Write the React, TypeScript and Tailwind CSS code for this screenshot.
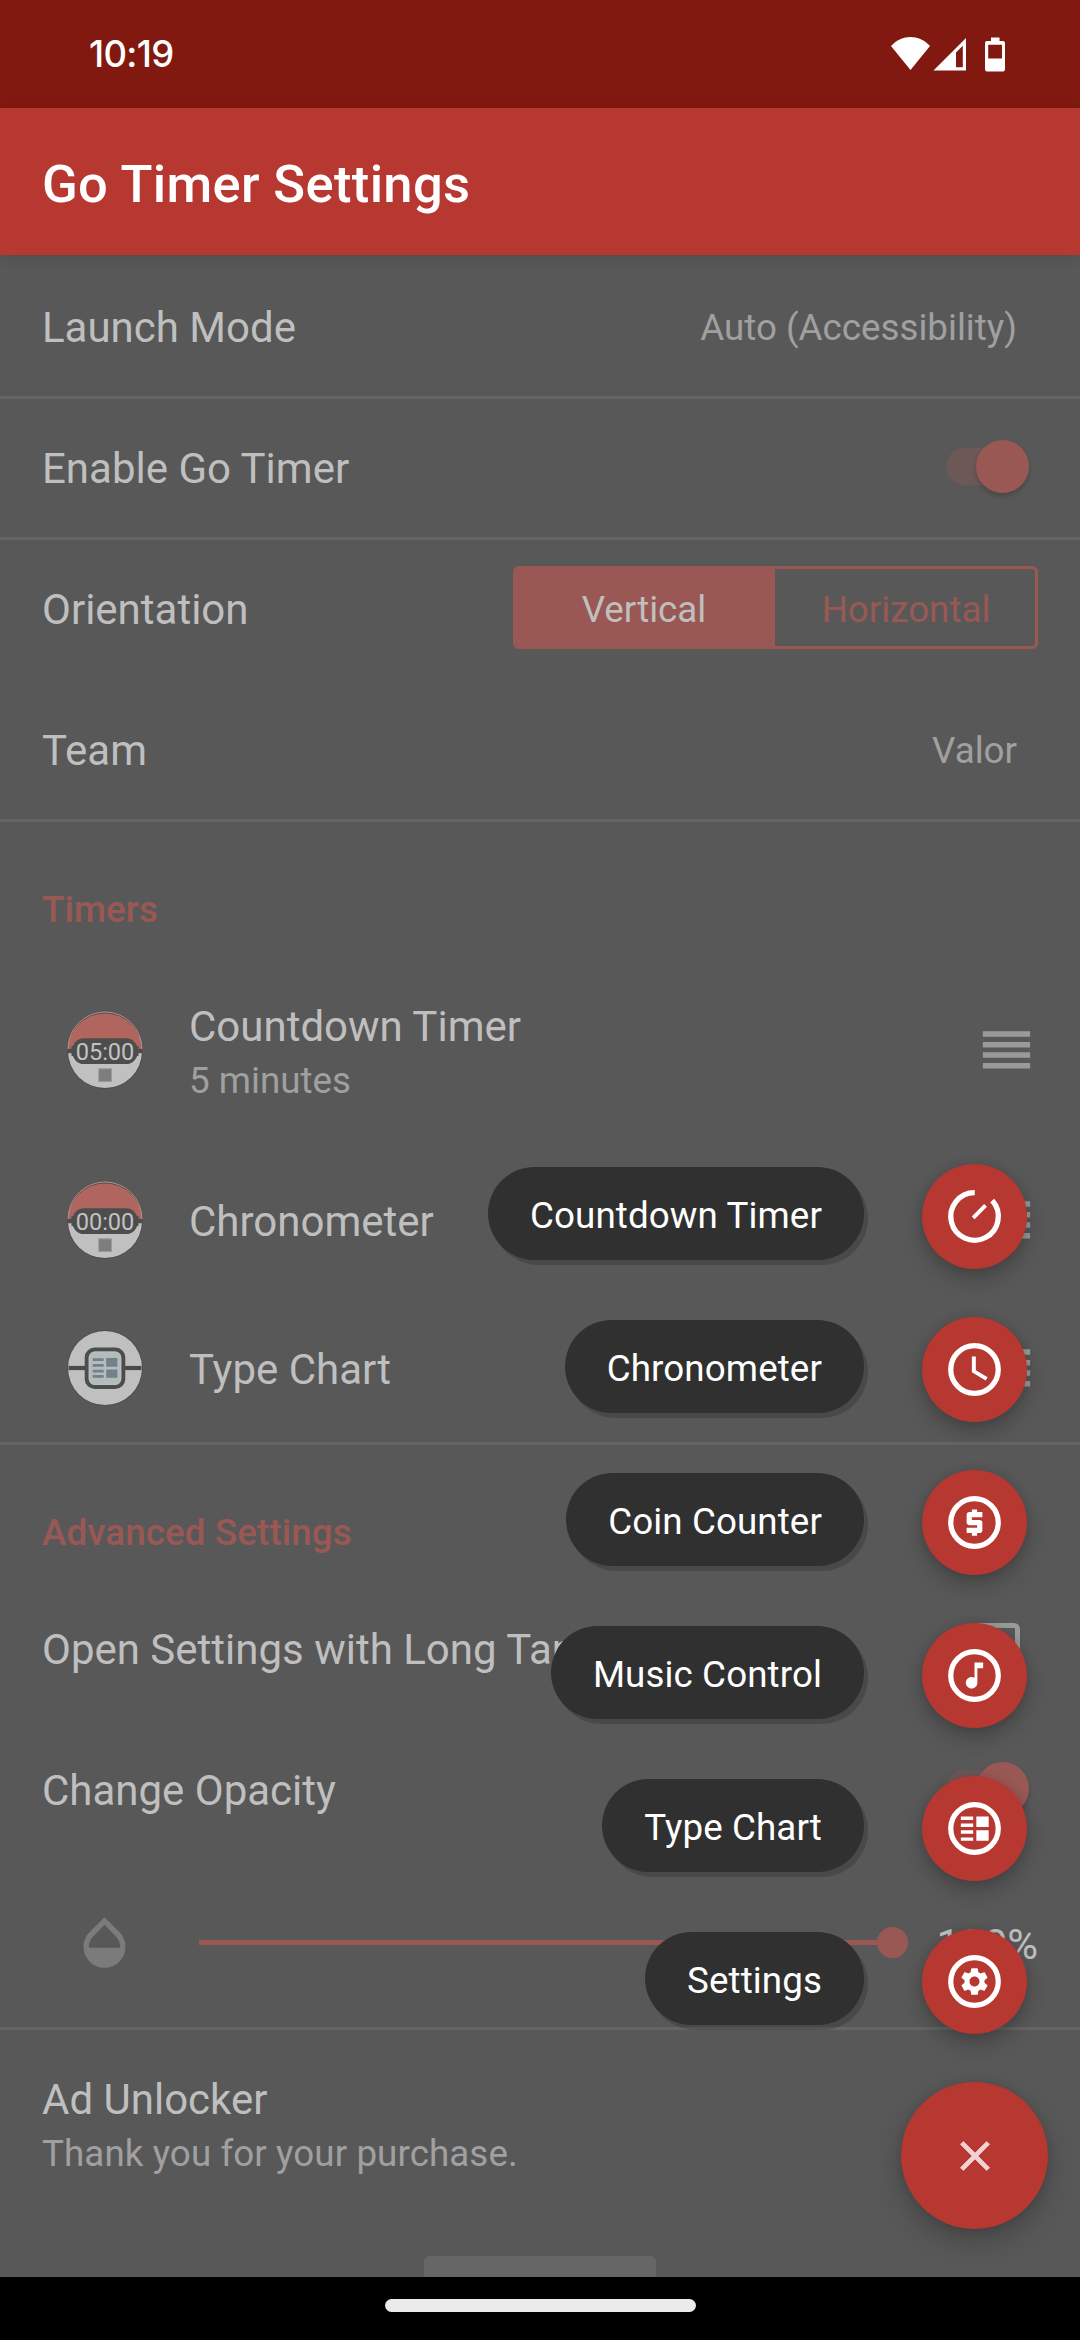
import type { ReactNode } from "react";

const ROBOTO = "font-['Roboto','Liberation_Sans',sans-serif]";

function Divider() {
  return <div className="h-[3px] shrink-0 bg-[#656565]" />;
}

function Row({ label, children }: { label: string; children?: ReactNode }) {
  return (
    <div className="mt-[3px] flex h-[138px] shrink-0 items-center justify-between pl-[42px]">
      <span className="text-[42px] leading-[49px] whitespace-nowrap text-[#bfbfbf]">{label}</span>
      {children}
    </div>
  );
}

function Value({ children }: { children: ReactNode }) {
  return <span className="pr-[63px] text-[36.75px] leading-[43px] text-[#a0a0a0]">{children}</span>;
}

function Toggle() {
  return (
    <div className="mr-[51px] mb-[3px] flex h-[53px] w-[83px] items-center">
      <div className="flex h-[37px] w-[74px] items-center rounded-full bg-[#6c5857]">
        <div className="ml-[30px] size-[53px] shrink-0 rounded-full bg-[#9a5855] shadow-[0_3px_5px_rgba(0,0,0,0.2)]" />
      </div>
    </div>
  );
}

function SectionHeader({ children }: { children: ReactNode }) {
  return (
    <h2 className="pt-[66px] pl-[42px] text-[36.75px] leading-[43px] font-medium tracking-[0.1px] text-[#9a5855]">
      {children}
    </h2>
  );
}

function Ball({ time }: { time: string }) {
  return (
    <svg className="size-[80px]" viewBox="-40 -40 80 80">
      <circle r="37.9" fill="#4d4d4d" />
      <circle r="37" fill="#c0c0c0" />
      <path d="M-36.6 -1A36.6 36.6 0 0 1 36.6 -1Z" fill="#b0665e" />
      <path d="M-37 -2A37 37 0 0 1 37 -2" fill="none" stroke="#b98a86" strokeWidth="1" />
      <rect x="-37" y="-2.2" width="74" height="4.4" fill="#4d4d4d" />
      <rect x="-33.5" y="-5" width="67" height="10" fill="#4d4d4d" />
      <rect x="-32.6" y="-12.7" width="65.2" height="25.8" rx="11.5" fill="#4d4d4d" />
      <text
        x="0"
        y="9"
        fontSize="23.6"
        textAnchor="middle"
        fill="#c2c2c2"
        className="font-['Roboto','Liberation_Sans',sans-serif]"
      >
        {time}
      </text>
      <rect x="-6.2" y="17.8" width="12.6" height="12.6" fill="#7d7d7d" stroke="#999" strokeWidth="1" />
    </svg>
  );
}

function ChartBall() {
  return (
    <svg className="size-[80px]" viewBox="-40 -40 80 80">
      <circle r="37.9" fill="#4d4d4d" />
      <circle r="37" fill="#c0c0c0" />
      <rect x="-36.5" y="-2.1" width="73" height="4.2" fill="#4a4a4a" />
      <rect x="-18.3" y="-18.5" width="36.6" height="37.4" rx="8" fill="#b4bbbd" stroke="#4d4d4d" strokeWidth="4" />
      <rect x="-15.7" y="-15.9" width="31.4" height="32.2" rx="5.5" fill="none" stroke="#c0c0c0" strokeWidth="1" />
      <path
        d="M-12.3-9.7h11v2.7h-11zM-12.3-4h11v2.7h-11zM-12.3 1.7h11v2.7h-11zM-12.3 7h11v2.7h-11zM1.2-10h11.2v8.7H1.2zM1.2 1.5h11.2v8.3H1.2z"
        fill="#72808a"
      />
    </svg>
  );
}

function DragHandle() {
  return (
    <svg className="mr-[42px] mb-[2px] size-[63px]" viewBox="0 0 24 24" fill="#9a9a9a">
      <path d="M3 5h18v2.1H3zM3 9.1h18v2.1H3zM3 13h18v2.1H3zM3 17.1h18v2.1H3z" />
    </svg>
  );
}

function TimerText({ title, detail }: { title: string; detail?: string }) {
  return (
    <div className="mt-[2px] ml-[44px] flex flex-1 flex-col gap-2">
      <span className="text-[42px] leading-[49px] text-[#bfbfbf]">{title}</span>
      {detail && <span className="text-[36.75px] leading-[43px] text-[#a0a0a0]">{detail}</span>}
    </div>
  );
}

const GEAR =
  "M19.14 12.94c.04-.3.06-.61.06-.94 0-.32-.02-.64-.07-.94l2.03-1.58c.18-.14.23-.41.12-.61l-1.92-3.32c-.12-.22-.37-.29-.59-.22l-2.39.96c-.5-.38-1.03-.7-1.62-.94l-.36-2.54c-.04-.24-.24-.41-.48-.41h-3.84c-.24 0-.43.17-.47.41l-.36 2.54c-.59.24-1.13.57-1.62.94l-2.39-.96c-.22-.08-.47 0-.59.22L2.74 8.87c-.12.21-.08.47.12.61l2.03 1.58c-.05.3-.09.63-.09.94s.02.64.07.94l-2.03 1.58c-.18.14-.23.41-.12.61l1.92 3.32c.12.22.37.29.59.22l2.39-.96c.5.38 1.03.7 1.62.94l.36 2.54c.05.24.24.41.48.41h3.84c.24 0 .44-.17.47-.41l.36-2.54c.59-.24 1.13-.56 1.62-.94l2.39.96c.22.08.47 0 .59-.22l1.92-3.32c.12-.22.07-.47-.12-.61l-2.01-1.58zM12 15.6c-1.98 0-3.6-1.62-3.6-3.6s1.62-3.6 3.6-3.6 3.6 1.62 3.6 3.6-1.62 3.6-3.6 3.6z";

const RING = <circle cx="12" cy="12" r="9.05" fill="none" stroke="#fff" strokeWidth="2" />;

const ACTIONS: { label: string; icon: ReactNode }[] = [
  {
    label: "Countdown Timer",
    icon: (
      <g fill="none" stroke="#fff">
        <path d="M12.1 2.95A9.05 9.05 0 1 0 18.75 5.95" strokeWidth="2" />
        <path d="M11.5 12.5l4.7-4.7" strokeWidth="1.5" />
      </g>
    ),
  },
  {
    label: "Chronometer",
    icon: (
      <>
        {RING}
        <path d="M12.5 7H11v6l5.25 3.15.75-1.23-4.5-2.67z" />
      </>
    ),
  },
  {
    label: "Coin Counter",
    icon: (
      <>
        {RING}
        <path d="M11 17h2v-1h1c.55 0 1-.45 1-1v-3c0-.55-.45-1-1-1h-3v-1h4V8h-2V7h-2v1h-1c-.55 0-1 .45-1 1v3c0 .55.45 1 1 1h3v1H9v2h2v1z" />
      </>
    ),
  },
  {
    label: "Music Control",
    icon: (
      <>
        {RING}
        <path
          transform="translate(5.4 5.4) scale(.55)"
          d="M12 3v10.55c-.59-.34-1.27-.55-2-.55-2.21 0-4 1.79-4 4s1.79 4 4 4 4-1.79 4-4V7h4V3h-6z"
        />
      </>
    ),
  },
  {
    label: "Type Chart",
    icon: (
      <>
        {RING}
        <path d="M6.8 7.4h4.7v1.4H6.8zM6.8 10.1h4.7v1.3H6.8zM6.8 12.7h4.7V14H6.8zM6.8 15.4h4.7v1.3H6.8zM12.7 7.4h4.7v4h-4.7zM12.7 12.7h4.7v4h-4.7z" />
      </>
    ),
  },
  {
    label: "Settings",
    icon: (
      <>
        {RING}
        <path transform="translate(5.64 5.64) scale(.53)" d={GEAR} />
      </>
    ),
  },
];

function SpeedDial() {
  return (
    <div className="absolute top-[1164px] right-[32px] flex flex-col items-end gap-[48px]">
      {ACTIONS.map((a) => (
        <div key={a.label} className="mr-[21px] flex h-[105px] items-center gap-[58px]">
          <span className="mb-[6px] flex h-[93px] items-center rounded-full bg-[#303030] px-[42px] pt-[3px] text-[36.75px] leading-[43px] tracking-[0.1px] whitespace-nowrap text-white shadow-[4px_5px_0_rgba(0,0,0,0.16)]">
            {a.label}
          </span>
          <div className="flex size-[105px] items-center justify-center rounded-full bg-[#b73731] shadow-[0_10px_20px_rgba(0,0,0,0.22),0_0_8px_rgba(0,0,0,0.1)]">
            <svg className="size-[63px]" viewBox="0 0 24 24" fill="#fff">
              {a.icon}
            </svg>
          </div>
        </div>
      ))}
      <div className="flex size-[147px] items-center justify-center rounded-full bg-[#b73731] shadow-[0_12px_26px_rgba(0,0,0,0.22),0_0_8px_rgba(0,0,0,0.1)]">
        <svg className="size-[50px]" viewBox="0 0 24 24" fill="#f0d3d2" stroke="#f0d3d2" strokeWidth="0.35">
          <path d="M19 6.41L17.59 5 12 10.59 6.41 5 5 6.41 10.59 12 5 17.59 6.41 19 12 13.41 17.59 19 19 17.59 13.41 12z" />
        </svg>
      </div>
    </div>
  );
}

function StatusBar() {
  return (
    <header className="flex h-[108px] shrink-0 items-center justify-between bg-[#821911] pr-[74px] pl-[89px]">
      <span className="font-['Inter','Roboto',sans-serif] text-[36.5px] leading-[44px] font-medium tracking-[-0.7px] text-white">
        10:19
      </span>
      <svg className="h-[36px] w-[116px]" viewBox="0 0 116 36" fill="#fff">
        <path d="M1 10C12-2 29-2 40 10L20.5 34Z" />
        <path fillRule="evenodd" d="M43.5 34.5L76 2V34.5ZM66 16.5V31.3H72.8V9.7Z" />
        <path
          fillRule="evenodd"
          d="M101 1.5h8.5V5h3.5q2 0 2 2v26q0 2.500-2 2.500H97q-2 0-2-2.500V7q0-2 2-2h4ZM98.200 8.700V22.500H112V8.700Z"
        />
      </svg>
    </header>
  );
}

export default function App() {
  return (
    <div className={`relative flex h-[2340px] w-[1080px] flex-col overflow-hidden bg-[#585858] ${ROBOTO}`}>
      <StatusBar />
      <div className="z-10 flex h-[147px] shrink-0 items-center bg-[#b73731] pt-[4px] pl-[42px] shadow-[0_2px_12px_rgba(0,0,0,0.12)]">
        <h1 className="text-[52.5px] leading-[62px] font-medium tracking-[0.35px] text-white">Go Timer Settings</h1>
      </div>

      <main className="flex min-h-0 flex-1 flex-col overflow-hidden">
        <Row label="Launch Mode">
          <Value>Auto (Accessibility)</Value>
        </Row>
        <Divider />
        <div className="-mt-[3px] flex flex-col">
          <Row label="Enable Go Timer">
            <Toggle />
          </Row>
        </div>
        <Divider />
        <div className="-mt-[3px] flex flex-col">
          <Row label="Orientation">
            <div className="mr-[42px] mb-[3px] flex h-[83px] w-[525px] overflow-hidden rounded-[6px] border-[3px] border-[#9a5855] text-[36.75px] leading-[43px]">
              <span className="flex w-[259px] items-center justify-center bg-[#9a5855] pt-[3px] pr-[3px] text-[#bfbfbf]">
                Vertical
              </span>
              <span className="flex flex-1 items-center justify-center pt-[3px] pl-[2px] text-[#9a5855]">
                Horizontal
              </span>
            </div>
          </Row>
        </div>
        <Row label="Team">
          <Value>Valor</Value>
        </Row>
        <Divider />

        <section className="flex shrink-0 flex-col">
          <SectionHeader>Timers</SectionHeader>
          <div className="mt-[23px] flex h-[193px] items-center pl-[65px]">
            <Ball time="05:00" />
            <TimerText title="Countdown Timer" detail="5 minutes" />
            <DragHandle />
          </div>
          <div className="flex h-[147px] items-center pl-[65px]">
            <Ball time="00:00" />
            <TimerText title="Chronometer" />
            <DragHandle />
          </div>
          <div className="flex h-[148px] items-center pl-[65px]">
            <ChartBall />
            <TimerText title="Type Chart" />
            <DragHandle />
          </div>
        </section>
        <Divider />

        <section className="flex shrink-0 flex-col">
          <SectionHeader>Advanced Settings</SectionHeader>
          <div className="mt-[23px] flex flex-col">
            <Row label="Open Settings with Long Tap">
              <div className="mr-[60px] mb-[6px] size-[47px] rounded-[6px] border-[5px] border-[#9a9a9a]" />
            </Row>
            <Row label="Change Opacity">
              <Toggle />
            </Row>
          </div>
          <div className="flex h-[168px] items-center pr-[42px] pb-[2px] pl-[73px]">
            <svg className="size-[63px]" viewBox="0 0 24 24" fill="#7b7b7b">
              <path d="M17.66 8L12 2.35 6.34 8C4.78 9.56 4 11.64 4 13.64s.78 4.11 2.34 5.67 3.61 2.35 5.66 2.35 4.1-.79 5.66-2.35S20 15.64 20 13.64 19.22 9.56 17.66 8zM6 14c.01-2 .62-3.27 1.76-4.4L12 5.27l4.24 4.38C17.38 10.77 17.99 12 18 14H6z" />
            </svg>
            <div className="ml-[63px] flex w-[709px] items-center">
              <div className="h-[5px] flex-1 bg-[#9a5855]" />
              <div className="size-[31px] rounded-full bg-[#9a5855]" />
            </div>
            <span className="mt-[4px] flex-1 text-right text-[42px] leading-[49px] text-[#bfbfbf]">100%</span>
          </div>
        </section>
        <Divider />

        <section className="flex shrink-0 flex-col gap-2 pt-[45px] pl-[42px]">
          <span className="text-[42px] leading-[49px] text-[#bfbfbf]">Ad Unlocker</span>
          <span className="text-[36.75px] leading-[43px] tracking-[0.08px] text-[#a0a0a0]">
            Thank you for your purchase.
          </span>
        </section>
        <div className="mt-[81px] ml-[424px] h-[40px] w-[232px] shrink-0 rounded-[6px] bg-[#666666]" />
      </main>

      <footer className="z-10 flex h-[63px] shrink-0 justify-center bg-black pt-[22px]">
        <div className="h-[13px] w-[311px] rounded-full bg-[#ebebeb]" />
      </footer>

      <SpeedDial />
    </div>
  );
}
